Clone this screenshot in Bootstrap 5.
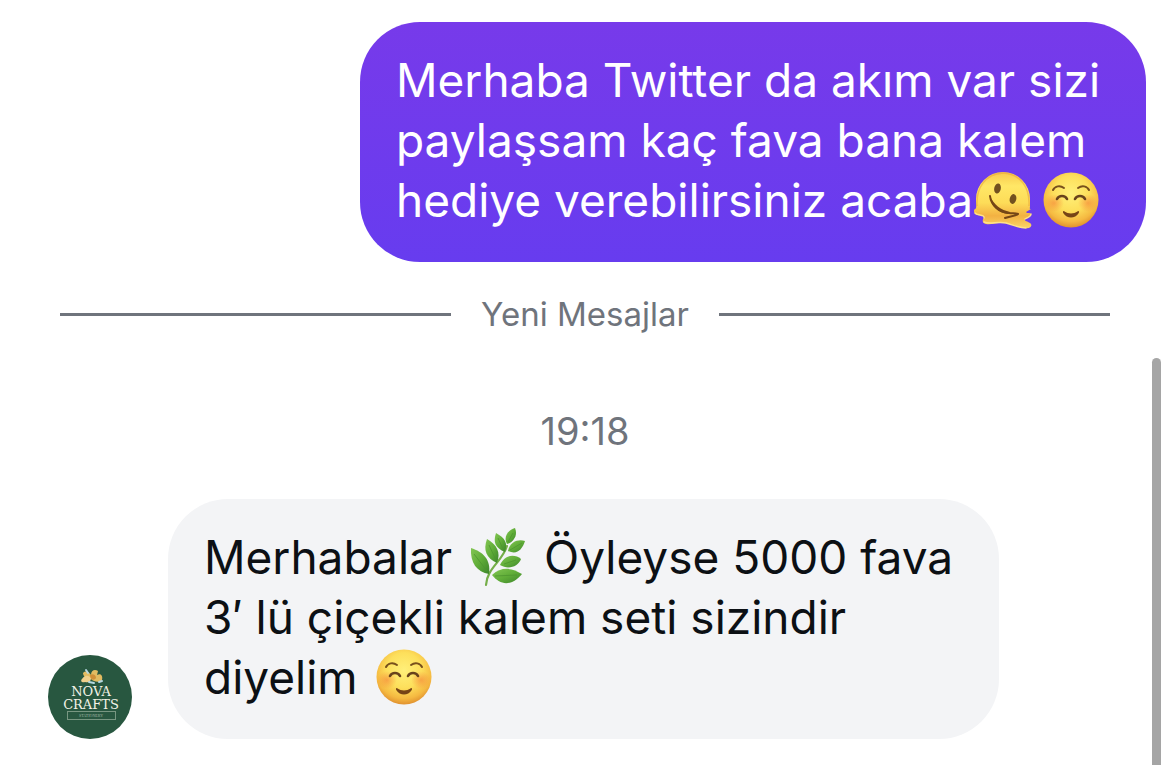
<!DOCTYPE html>
<html lang="tr">
<head>
<meta charset="utf-8">
<meta name="viewport" content="width=device-width, initial-scale=1">
<title>Mesajlar</title>
<link href="https://cdn.jsdelivr.net/npm/bootstrap@5.3.0/dist/css/bootstrap.min.css" rel="stylesheet">
<style>
body { font-family: Inter, "Liberation Sans", sans-serif; background: #fff; }
.chat { min-height: 100vh; padding: 22px 24px 26px 48px; overflow: hidden; }
.bubble { border-radius: 60px; padding: 28px 32px 32px 36px; font-size: 46px; line-height: 60px; width: 100%; }
.bubble-out { max-width: 786px; color: #fff; background: linear-gradient(#773aea, #673cef); }
.bubble-in { max-width: 831px; color: #0c1014; background: #f3f4f6; }
.emoji { width: 60px; height: 60px; vertical-align: -7px; margin: -6px 3px; }
.bubble-out .emoji { margin: -6px 8px -6px 0; }
.muted { color: #6f747c; }
.divider { gap: 30px; margin: 32px 36px 0 12px; font-size: 33px; line-height: 40px; }
.rule { height: 3px; background: #6f747c; }
.stamp { margin: 76px 24px 47px 0; font-size: 38px; line-height: 42px; }
.avatar { width: 84px; height: 84px; margin-right: 36px; }
.thumb { width: 9px; top: 358px; right: 9px; bottom: 0; border-radius: 5px 5px 0 0; background: #a5a5a5; }
</style>
</head>
<body>
<svg width="0" height="0" class="position-absolute" aria-hidden="true">
  <defs>
    <radialGradient id="face" cx=".5" cy=".38" r=".64">
      <stop offset="0" stop-color="#fff07a"/><stop offset=".5" stop-color="#fddf5b"/><stop offset=".8" stop-color="#f5b941"/><stop offset="1" stop-color="#dd8a2c"/>
    </radialGradient>
    <radialGradient id="blush"><stop offset="0" stop-color="#f58038" stop-opacity=".6"/><stop offset="1" stop-color="#f58038" stop-opacity="0"/></radialGradient>
    <linearGradient id="melt" x1="0" y1="0" x2="0" y2="1"><stop offset="0" stop-color="#f7c84d"/><stop offset=".25" stop-color="#ffe766"/><stop offset=".55" stop-color="#fddc58"/><stop offset=".78" stop-color="#f3b142"/><stop offset="1" stop-color="#fbd568"/></linearGradient>
    <linearGradient id="leaf" x1="0" y1="0" x2="1" y2="1"><stop offset="0" stop-color="#83c653"/><stop offset=".5" stop-color="#60ad38"/><stop offset="1" stop-color="#3d852c"/></linearGradient>
    <symbol id="smile" viewBox="0 0 60 60">
      <circle cx="30" cy="30" r="27.5" fill="url(#face)"/>
      <ellipse cx="13" cy="33" rx="10" ry="9" fill="url(#blush)"/><ellipse cx="47" cy="33" rx="10" ry="9" fill="url(#blush)"/>
      <path d="M12 20C14 16 19 15 23 18M37 18C41 15 46 16 48 20" fill="none" stroke="#78501c" stroke-width="2" stroke-linecap="round"/>
      <path d="M16 29C18 25 24 25 26 29M34 29C36 25 42 25 44 29" fill="none" stroke="#68431c" stroke-width="2.600" stroke-linecap="round"/>
      <path d="M23.500 41.500C27 44 33 44 36.500 41.500C37.500 40.500 38.500 41.500 37.800 43C34 49 26 49 22.200 43C21.500 41.500 22.500 40.500 23.500 41.500Z" fill="#764416"/>
    </symbol>
  </defs>
</svg>
<main class="chat position-relative d-flex flex-column">
  <div class="bubble bubble-out align-self-end">Merhaba Twitter da akım var sizi<br>paylaşsam kaç fava bana kalem<br><span class="text-nowrap">hediye verebilirsiniz acaba<svg class="emoji" viewBox="0 0 60 60" role="img" aria-label="Eriyen yüz">
      <path d="M3 29A27 27 0 0 1 57 29V36C57 38 56 39 58 39L53 42C54 44 57 42 58 44C59 47 54 47 52 49C51 51 54 51 57 53C60 55 58 59 52 58C45 58 39 54 32 53C25 52 19 55 13 54C9 53 9 50 11 48C12 45 8 46 4 45C1 44 0 40 2 39C4 38 3 35 3 29Z" fill="url(#melt)"/>
      <path d="M2 43C4 46 12 44 11 48M11 52C17 55 24 51 33 53C40 55 46 58 53 58M52 49C55 47 58 47 58 44" fill="none" stroke="#ffe18a" stroke-width="1.400" stroke-linecap="round"/>
      <path d="M4 36C3 18 12 4 30 3C48 4 57 18 56 36" fill="none" stroke="#e9a83a" stroke-width="1.500" opacity=".6"/>
      <ellipse cx="24.500" cy="18.500" rx="3.300" ry="5" transform="rotate(12 24.500 18.500)" fill="#72501f"/>
      <ellipse cx="40" cy="29" rx="3.300" ry="5" transform="rotate(14 40 29)" fill="#72501f"/>
      <path d="M17 26C18 35 26 43 36 43C40 43.500 43 43 45 44C43 46 37 46 32 48" fill="none" stroke="#754616" stroke-width="2" stroke-linecap="round" stroke-linejoin="round"/>
      <path d="M17 26C21 35 28 40 37 42L35 44C25 43 17 35 17 26Z" fill="#754616"/>
    </svg><svg class="emoji" role="img" aria-label="Gülümseyen yüz"><use href="#smile"/></svg></span></div>

  <div class="divider muted d-flex align-items-center" role="separator">
    <span class="rule flex-fill"></span><span>Yeni Mesajlar</span><span class="rule flex-fill"></span>
  </div>
  <time class="stamp muted text-center d-block">19:18</time>

  <div class="d-flex align-items-end">
    <svg class="avatar flex-shrink-0" viewBox="0 0 84 84" role="img" aria-label="Nova Crafts">
      <circle cx="42" cy="42" r="42" fill="#285740"/>
      <g fill="#e2bb61">
        <path d="M43 24C38 24 35 21 35 18C38 15 41 17 43 20C43 15 47 14 50 16L49 20C53 18 55 21 54 25C51 28 46 27 43 24Z"/>
        <path d="M34 24C37 20 40 20 43 23C43 27 40 28 37 27C34 28 32 26 34 24Z" fill="#efcf8b"/>
      </g>
      <path d="M42 20C45 18 48 20 48 23C46 26 42 25 42 20Z" fill="#d08f37"/>
      <path d="M40 18L38 15M41 27L46 28M51 27L54 26" stroke="#b6d7df" stroke-width="2" stroke-linecap="round"/>
      <g fill="#f2f2e6" text-anchor="middle">
        <text x="43" y="41" font-size="13" font-family="DejaVu Serif, serif">NOVA</text>
        <text x="43" y="54" font-size="13" font-family="DejaVu Serif, serif">CRAFTS</text>
        <text x="43" y="62" font-size="4" font-family="Liberation Serif, serif" fill="#a2b8a5">STATIONERY</text>
      </g>
      <rect x="19.500" y="56.500" width="48" height="8" fill="none" stroke="#789782"/>
    </svg>
    <div class="bubble bubble-in">Merhabalar <svg class="emoji" viewBox="0 -1 60 60" role="img" aria-label="Yeşil yapraklı dal">
      <path d="M18 57C19 40 34 34 39 18" fill="none" stroke="#75ae49" stroke-width="2.200" stroke-linecap="round"/>
      <g fill="url(#leaf)">
        <path d="M3 20C15 24 23 31 21 46C9 44 2 35 3 20Z"/><path d="M19 11C29 17 33 24 29 35C18 30 15 22 19 11Z"/>
        <path d="M28 5C37 10 40 15 37 24C27 20 25 14 28 5Z"/><path d="M47 0C50 7 46 14 39 16C35 9 40 2 47 0Z"/>
        <path d="M57 13C51 11 42 13 40 23C49 27 54 22 57 13Z"/><path d="M32 37C37 26 47 26 53 31C50 39 40 42 32 37Z"/>
        <path d="M24 47C34 38 44 40 54 46C43 59 32 57 24 47Z"/>
      </g>
      <path d="M6 26L19 43M21 17L27 30M30 10L35 21M45 5L40 14M54 15L42 22M48 32L36 36M49 47L27 48" stroke="#4e9630" stroke-width=".800" fill="none"/>
    </svg> Öyleyse 5000 fava<br>3′ lü çiçekli kalem seti sizindir<br>diyelim <svg class="emoji" role="img" aria-label="Gülümseyen yüz"><use href="#smile"/></svg></div>
  </div>
  <div class="thumb position-absolute" aria-hidden="true"></div>
</main>
<script src="https://cdn.jsdelivr.net/npm/bootstrap@5.3.0/dist/js/bootstrap.bundle.min.js"></script>
</body>
</html>
